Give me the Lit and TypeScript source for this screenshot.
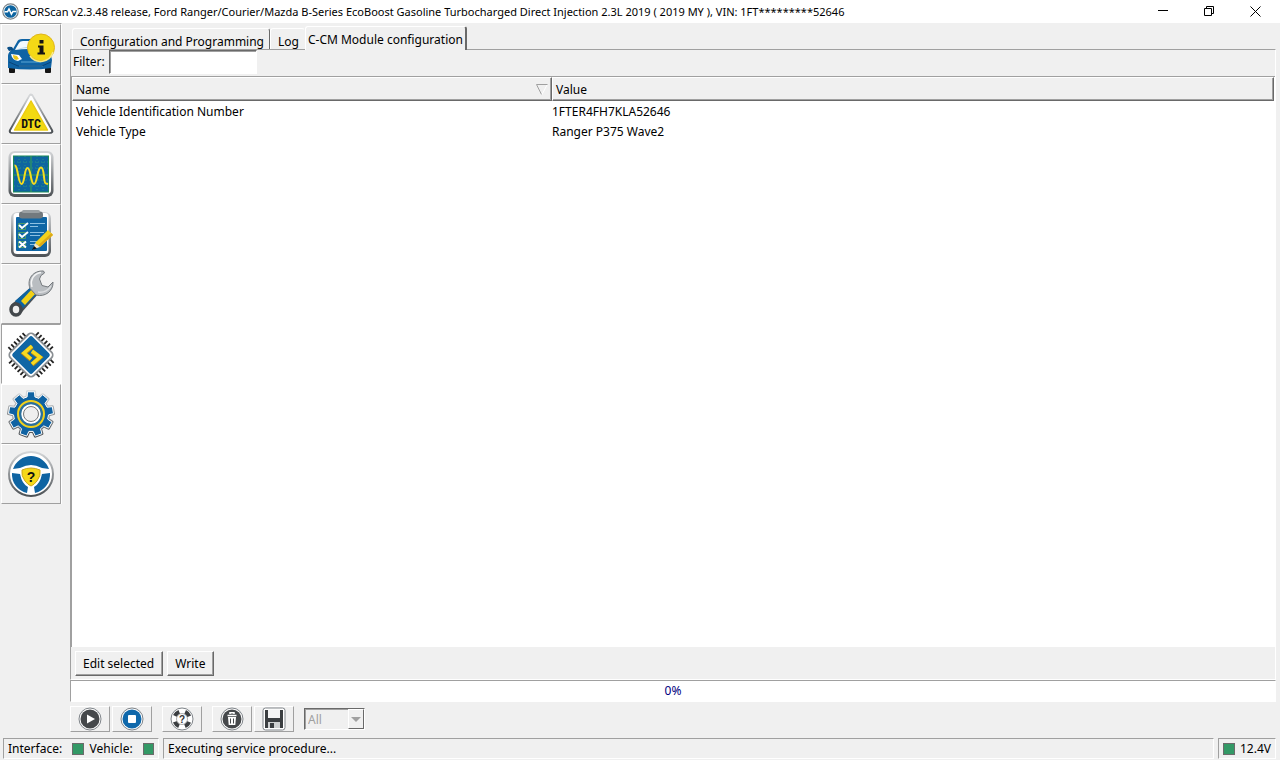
import { LitElement, html, svg, css, TemplateResult } from "lit";
import { customElement, state } from "lit/decorators.js";
import { classMap } from "lit/directives/class-map.js";

const logoIcon = html`<svg width="17" height="17" viewBox="0 0 17 17" aria-hidden="true">
  <circle cx="8.5" cy="8.5" r="7.7" fill="#fff" stroke="#7d858a" stroke-width="1.2" />
  <circle cx="8.5" cy="8.5" r="6.3" fill="#0d64a0" />
  <path d="M2.5 8.8h3L7 6l2.4 5.2L11 8.4h3.4" fill="none" stroke="#fff" stroke-width="1.5" />
</svg>`;

// Outline of a nine-toothed gear centred at 24,24; the first tooth points up.
const gearPath = (() => {
  const at = (deg: number, r: number) => {
    const a = ((deg - 90) * Math.PI) / 180;
    return `${(24 + r * Math.cos(a)).toFixed(1)} ${(24 + r * Math.sin(a)).toFixed(1)}`;
  };
  const pts: string[] = [];
  for (let i = 0; i < 9; i++) {
    const t = i * 40;
    pts.push(at(t - 13, 17.5), at(t - 9, 22.5), at(t + 9, 22.5), at(t + 13, 17.5));
  }
  return `M${pts.join("L")}z`;
})();

const icons: Record<string, TemplateResult> = {
  car: svg`
    <rect x="2" y="35" width="6" height="8" rx="1" fill="#151515" /><rect x="38" y="35" width="6" height="8" rx="1" fill="#151515" />
    <path d="M1 38V26q0-4 5-7l4-7q1-3 5-3h18l10 12 2 9-1 8q-20 3-43 0z" fill="#0f63a4" />
    <path d="M9 18l3-5q1-2 4-2h17v9q-12-2-25 0z" fill="#f2f9fd" />
    <path d="M14 18q10-2 18-1v2q-10-2-21 0z" fill="#9fcbe6" />
    <path d="M0 18q1-2 5-1l2 3-5 1z" fill="#0b4f87" />
    <path d="M4 24l8 1 3 4-4 2q-6-1-7-7z" fill="#fff" /><path d="M6 25l4 1 2 3-3 1q-3-1-3-5z" fill="#e8c51d" />
    <path d="M14 32h20M12 36h24" stroke="#5da7d4" stroke-width="1" fill="none" />
    <path d="M2 32l9 4h24l9-4" stroke="#0a4478" fill="none" />
    <circle cx="34" cy="17.500" r="13.500" fill="#f4d816" stroke="#e0b51c" stroke-width="1" />
    <path d="M23 26a13 13 0 0 0 23-4" fill="none" stroke="#f8e98a" stroke-width="1.500" />
    <path d="M32.500 10h4v3.500h-4zM31 15.500h5.500v7H38v2h-7.500v-2h2v-5H31z" fill="#141414" />`,
  dtc: svg`
    <path d="M24 6.500L43.500 41h-39z" fill="#fff" stroke="url(#silver)" stroke-width="5.500" stroke-linejoin="round" />
    <path d="M24 7L43 41H5z" fill="#fff" stroke="#fff" stroke-width="2.500" stroke-linejoin="round" />
    <path d="M24 11L40.500 40h-33z" fill="#f2d912" stroke="#eccb12" stroke-width="1.500" stroke-linejoin="round" />
    <text x="24" y="38" text-anchor="middle" class="glyph narrow">DTC</text>`,
  scope: svg`
    <rect x="1.500" y="1" width="45" height="46" rx="6" fill="url(#silver)" />
    <rect x="4" y="3" width="40" height="41" rx="4" fill="#fff" />
    <rect x="6.500" y="6" width="35" height="36" fill="#0e65a0" stroke="#1d8a57" />
    <path d="M12 6v36M18 6v36M30 6v36M36 6v36M7 12h34M7 18h34M7 30h34M7 36h34" stroke="#268f86" stroke-dasharray="1 2" />
    <path d="M24 6v36M7 25h34" stroke="#3ba54b" />
    <path d="M7.500 15.500C11 15 11 34 14.500 34S17 18 20.500 18 23.500 34 27 34 30 17.500 34 17.500 36 33.500 39 33.500L41 34" fill="none" stroke="#f6dc1e" stroke-width="2" />`,
  checklist: svg`
    <rect x="4" y="2" width="40" height="45" rx="6" fill="url(#silver)" />
    <rect x="6.500" y="3" width="35" height="41" rx="3.500" fill="#fff" />
    <rect x="9" y="7" width="31" height="34" rx="1" fill="#0f66a5" />
    <rect x="12" y="1.500" width="24" height="7" rx="3" fill="#737a7e" /><rect x="15" y="0" width="18" height="3" rx="1.500" fill="#9aa0a3" />
    <path d="M11.500 13.500h7v6h-7zM11.500 22.500h7v6h-7zM11.500 31.500h7v6h-7z" fill="none" stroke="#4e9b66" />
    <path d="M12 15l3 3 6-5M12 24l3 3 6-5" fill="none" stroke="#fff" stroke-width="2" />
    <path d="M12 31.500l7 6M19 31.500l-7 6" stroke="#fff" stroke-width="2" />
    <path d="M23 13.500h15M23 16.500h8M23 22.500h14M23 25.500h10M23 31.500h8M23 34.500h5" stroke="#8cc0e2" />
    <path d="M28 33L41 20l5 5L33 37z" fill="#f4d11d" /><path d="M31 35.500L44.500 23l1.500 2-13 12z" fill="#dda916" />
    <path d="M28 33l5 4-7 2.500z" fill="#f6e6c0" /><path d="M27 36l3 2.500-5 1.500z" fill="#111" />`,
  wrench: svg`
    <path d="M3.500 35.500L25 16l7 7-17 19z" fill="#4b5054" />
    <path d="M8 31L24 17l6.500 6.500L15 39z" fill="#0e63a1" /><path d="M14 31L25 19l4 4-11 12z" fill="#f1d017" />
    <path d="M36.500 1C26 .5 19.500 9 23 18.500l6 6.500c9 2.500 17.500-4 17-13l-5 5-6-1.500-2.500-6.500q.5-4 5-6z" fill="#b9bdc1" stroke="#74797d" stroke-linejoin="round" />
    <path d="M25 17C22.500 9 28 3 34 2.500" fill="none" stroke="#f3f4f5" stroke-width="1.500" />
    <path d="M31 22c6 1 11-2 13-6" fill="none" stroke="#dcdee0" stroke-width="1.500" />
    <ellipse cx="9" cy="39.500" rx="5" ry="5.500" fill="#efefef" stroke="#43484c" stroke-width="3.500" />`,
  chip: svg`
    ${[45, 135, 225, 315].map((a) => svg`<path d="M13.500 7V2.500M17.500 7V2.500M21.500 7V2.500M25.500 7V2.500M29.500 7V2.500M33.500 7V2.500" transform="rotate(${a} 24 24)" stroke="#222" stroke-width="1.800" />`)}
    <rect x="7.500" y="7.500" width="33" height="33" rx="4" transform="rotate(45 24 24)" fill="#fff" stroke="#8a8f93" stroke-width="1.800" />
    <rect x="10" y="10" width="28" height="28" rx="2.500" transform="rotate(45 24 24)" fill="#0f66a5" />
    <path d="M25 15.500l-8 7 7 6M25 20.500l8 6-8 7" fill="none" stroke="#b98b12" stroke-width="4.500" />
    <path d="M25 15l-8 7 7 6M25 20l8 6-8 7" fill="none" stroke="#f7da22" stroke-width="3.500" />`,
  gear: svg`
    <path d=${gearPath} fill="#fff" stroke="url(#silver)" stroke-width="3" stroke-linejoin="round" />
    <path d=${gearPath} fill="#0f62a2" stroke="#fff" stroke-width="1" stroke-linejoin="round" />
    <circle cx="24" cy="24" r="13" fill="#2a6f9c" stroke="#f1d01b" stroke-width="2" />
    <circle cx="24" cy="24" r="8.500" fill="#efefef" stroke="#fff" stroke-width="2.500" />
    <circle cx="24" cy="24" r="7.500" fill="#efefef" stroke="#777" />`,
  wheel: svg`
    <circle cx="24" cy="24" r="22" fill="#fff" stroke="url(#silver)" stroke-width="2" />
    <path d="M6 19A19 19 0 0 1 42 19L35 18Q29 15 24 15T13 18z" fill="#0f64a2" />
    <path d="M5 23l8 1Q15 34 21 37l-1 6A19 19 0 0 1 5 23zM43 23l-8 1Q33 34 27 37l1 6A19 19 0 0 0 43 23z" fill="#0f64a2" />
    <path d="M15 20q9-4 18 0 1 6-3 11-3 4-6 5-3-1-6-5-4-5-3-11z" fill="#f5d81a" stroke="#cfa91c" />
    <text x="24" y="32" text-anchor="middle" class="glyph">?</text>`,
};

const nav: [string, string][] = [
  ["car", "Vehicle information"], ["dtc", "DTC"], ["scope", "Dashboard"], ["checklist", "Tests"],
  ["wrench", "Service functions"], ["chip", "Configuration and Programming"], ["gear", "Settings"], ["wheel", "Help"],
];

const ring = (fill: string) => svg`<circle cx="12" cy="12" r="11" fill="#fff" stroke="#80858a" /><circle cx="12" cy="12" r="9.500" fill=${fill} />`;

const tools: { label: string; gap?: boolean; icon: TemplateResult }[] = [
  { label: "Run", icon: svg`${ring("#45484b")}<path d="M9 7.500v9l8-4.500z" fill="#fff" />` },
  { label: "Stop", icon: svg`${ring("#0f68ab")}<rect x="8" y="8" width="8" height="8" rx="1" fill="#fff" />` },
  { label: "Help", gap: true, icon: svg`<circle cx="12" cy="12" r="11" fill="#fff" stroke="#80858a" />
      <circle cx="12" cy="12" r="7.500" fill="none" stroke="#3b3e41" stroke-width="4.500" stroke-dasharray="5.890 5.890" transform="rotate(22.500 12 12)" />
      <circle cx="12" cy="12" r="5.500" fill="#fff" stroke="#999" stroke-width=".8" />
      <text x="12" y="15.500" text-anchor="middle" class="glyph small">?</text>` },
  { label: "Clear", gap: true, icon: svg`${ring("#45484b")}<path d="M7.500 8.500h9M10 7V5.800h4V7" stroke="#fff" stroke-width="1.500" fill="none" />
      <path d="M8 10h8l-.7 8H8.700z" fill="#fff" /><path d="M10.500 11.500v5M13.500 11.500v5" stroke="#45484b" />` },
  { label: "Save", icon: svg`<rect x="1" y="1" width="22" height="22" rx="2.500" fill="#fff" stroke="#80858a" />
      <path d="M3 3h18v18H3z" fill="#3b3e41" /><path d="M6 2.500h12V11H6z" fill="#f4f4f4" />
      <path d="M6 15h12v6H6z" fill="#cfd1d2" /><path d="M8 16h4v5H8z" fill="#3b3e41" />` },
];

@customElement("app-root")
export class AppRoot extends LitElement {
  @state() private section = "chip";
  @state() private filter = "";

  private rows = [
    ["Vehicle Identification Number", "1FTER4FH7KLA52646"],
    ["Vehicle Type", "Ranger P375 Wave2"],
  ];

  static styles = css`
    :host {
      display: flex;
      flex-direction: column;
      min-height: 100vh;
      background: #f0f0f0;
      color: #000;
      font: 12px/16px "Noto Sans", "Open Sans", sans-serif;
    }
    *, *::before, *::after { box-sizing: border-box; }
    button, input, select { font: inherit; color: inherit; margin: 0; border-radius: 0; }
    svg { display: block; }
    .glyph { font: bold 14px "Liberation Sans", sans-serif; fill: #111; }
    .glyph.narrow { font: bold 13px "Liberation Sans Narrow", "Roboto Condensed", "Open Sans Condensed", "Liberation Sans", sans-serif; font-size: 12px; }
    .glyph.small { font-size: 10px; fill: #333; }

    .titlebar { display: flex; align-items: center; height: 23px; background: #fff; padding: 0 2px; }
    .titlebar h1 { margin: 0 auto 0 4px; font-size: 11px; font-weight: 400; white-space: nowrap; }
    .win { width: 46px; height: 22px; padding: 0; border: 0; background: none; display: grid; place-items: center; }

    .body { flex: 1; display: flex; gap: 8px; padding-right: 4px; }
    .nav { width: 62px; border-right: 1px solid #fff; border-top: 1px solid #a0a0a0; align-self: flex-start; padding-left: 1px; }
    .nav button {
      display: grid; place-items: center; width: 60px; height: 60px; padding: 0; background: #f0f0f0;
      border: 1px solid; border-color: #fff #a0a0a0 #a0a0a0 #fff;
    }
    .nav button.on { background: #fff; border-color: #a0a0a0 #fff #fff #a0a0a0; padding-top: 2px; }

    .main { flex: 1; display: flex; flex-direction: column; min-width: 0; padding-top: 3px; }
    .tabs { display: flex; align-items: flex-end; height: 23px; padding-left: 2px; }
    .tab {
      height: 21px; padding: 5px 5px 0 7px; border: 1px solid; border-color: #fff #696969 transparent #fff;
      border-bottom: 0; border-radius: 3px 3px 0 0; background: #f0f0f0; white-space: nowrap; line-height: 15px;
    }
    .tab.plain { border-right-color: transparent; }
    .tab.on { height: 24px; padding: 4px 2px 2px; margin-bottom: -1px; z-index: 1; position: relative; border-right: 2px solid #696969; }

    .page { flex: 1; display: flex; flex-direction: column; border: 1px solid; border-color: #a0a0a0 #fff #fff #a0a0a0; }
    .filter { display: flex; align-items: center; gap: 4px; padding: 0 0 2px 2px; height: 26px; }
    .filter input {
      width: 148px; height: 24px; padding: 1px 3px; background: #fff; outline: none;
      border: 1px solid; border-color: #696969 #fff #fff #696969; box-shadow: inset 1px 1px #a0a0a0;
    }
    .list { flex: 1; background: #fff; border-left: 1px solid #a0a0a0; border-top: 1px solid #a0a0a0; padding-right: 1px; }
    table { width: 100%; border-collapse: separate; border-spacing: 0; table-layout: fixed; }
    th {
      height: 24px; padding: 2px 3px 0; text-align: left; font-weight: 400; background: #f0f0f0;
      border: 1px solid; border-color: #fff #696969 #696969 #fff; box-shadow: inset -1px -1px #a0a0a0;
    }
    th:first-child { width: 480px; }
    .sort { display: flex; align-items: center; justify-content: space-between; }
    .sort svg { margin-bottom: 2px; }
    td { height: 20px; padding: 0 0 0 4px; }
    td + td { padding-left: 0; }
    tbody::before { content: ""; display: block; height: 1px; }
    .actions { display: flex; gap: 4px; padding: 4px 4px 3px; }
    .actions button, .combo {
      background: #f0f0f0; border: 1px solid; border-color: #fff #696969 #696969 #fff; box-shadow: inset -1px -1px #a0a0a0;
    }
    .actions button { height: 25px; padding: 0 8px 0 7px; }

    .progress {
      display: grid; place-items: center; height: 22px; color: #000080; background: #fff;
      border: 1px solid; border-color: #a0a0a0 #fff #fff #a0a0a0;
    }
    .tools { display: flex; align-items: center; gap: 2px; padding: 4px 0 3px; }
    .tools button {
      display: grid; place-items: center; width: 40px; height: 26px; padding: 0; background: #f0f0f0;
      border: 1px solid; border-color: #fff #a0a0a0 #a0a0a0 #fff;
    }
    .tools button.gap { margin-left: 8px; }
    .combo {
      position: relative; width: 61px; height: 22px; margin-left: 8px;
      border-color: #696969 #fff #fff #696969; box-shadow: inset 1px 1px #a0a0a0;
    }
    .combo select { appearance: none; width: 100%; height: 20px; padding: 2px 3px 0; border: 0; background: none; color: #a0a0a0; opacity: 1; }
    .arrow {
      position: absolute; right: 0; top: 0; width: 16px; height: 20px; display: grid; place-items: center; pointer-events: none;
      background: #f0f0f0; border: 1px solid; border-color: #fff #696969 #696969 #fff;
    }

    .status { display: flex; gap: 4px; padding: 3px 4px 1px 3px; }
    .status > div {
      display: flex; align-items: center; height: 21px; padding: 0 4px; white-space: nowrap;
      border: 1px solid; border-color: #a0a0a0 #fff #fff #a0a0a0;
    }
    .status .grow { flex: 1; }
    .status .links { gap: 6px; width: 156px; }
    .links span { padding-right: 4px; }
    .status .volts { gap: 5px; width: 58px; }
    .lamp { width: 12px; height: 12px; background: #339966; border: 1px solid #6b6b6b; }
  `;

  render() {
    return html`
      <header class="titlebar">
        ${logoIcon}
        <h1>FORScan v2.3.48 release, Ford Ranger/Courier/Mazda B-Series EcoBoost Gasoline Turbocharged Direct Injection 2.3L 2019 ( 2019 MY ), VIN: 1FT*********52646</h1>
        <button class="win" aria-label="Minimize"><svg width="10" height="11"><path d="M0 4.500h10" stroke="#000" /></svg></button>
        <button class="win" aria-label="Restore"><svg width="11" height="11" fill="none" stroke="#000"><path d="M.5 2.500h7v7h-7zM2.500 2V.5h7v7H8" /></svg></button>
        <button class="win" aria-label="Close"><svg width="11" height="11"><path d="M.5.5l10 10M10.500.5l-10 10" stroke="#000" /></svg></button>
      </header>
      <div class="body">
        <nav class="nav">
          ${nav.map(([id, label]) => html`
            <button class=${classMap({ on: this.section === id })} aria-label=${label} @click=${() => (this.section = id)}>
              <svg width="48" height="48" viewBox="0 0 48 48" aria-hidden="true">
                <defs><linearGradient id="silver" x1="0" y1="0" x2="0" y2="1">
                  <stop offset="0" stop-color="#d4d6d8" /><stop offset="1" stop-color="#4c5155" />
                </linearGradient></defs>
                ${icons[id]}
              </svg>
            </button>`)}
        </nav>
        <main class="main">
          <div class="tabs" role="tablist">
            <button class="tab" role="tab">Configuration and Programming</button>
            <button class="tab plain" role="tab">Log</button>
            <button class="tab on" role="tab" aria-selected="true">C-CM Module configuration</button>
          </div>
          <section class="page">
            <div class="filter">
              <label for="filter">Filter:</label>
              <input id="filter" type="text" .value=${this.filter}
                @input=${(e: Event) => (this.filter = (e.target as HTMLInputElement).value)} />
            </div>
            <div class="list">
              <table>
                <thead>
                  <tr>
                    <th scope="col"><span class="sort">Name
                      <svg width="12" height="11" fill="none"><path d="M11.500.5H.5L5.500 10.500" stroke="#a0a0a0" /><path d="M11 1L6 10.500" stroke="#fff" /></svg>
                    </span></th>
                    <th scope="col">Value</th>
                  </tr>
                </thead>
                <tbody>
                  ${this.rows
                    .filter((r) => r.join(" ").toLowerCase().includes(this.filter.toLowerCase()))
                    .map(([name, value]) => html`<tr><td>${name}</td><td>${value}</td></tr>`)}
                </tbody>
              </table>
            </div>
            <div class="actions"><button>Edit selected</button><button>Write</button></div>
          </section>
          <div class="progress" role="progressbar" aria-valuenow="0" aria-label="Progress">0%</div>
          <div class="tools">
            ${tools.map((t) => html`
              <button class=${classMap({ gap: !!t.gap })} aria-label=${t.label}>
                <svg width="24" height="24" viewBox="0 0 24 24" aria-hidden="true">${t.icon}</svg>
              </button>`)}
            <div class="combo">
              <select aria-label="Show" disabled><option>All</option></select>
              <span class="arrow"><svg width="10" height="5"><path d="M0 0h10L5 5z" fill="#a0a0a0" /></svg></span>
            </div>
          </div>
        </main>
      </div>
      <footer class="status">
        <div class="links"><span>Interface:</span><i class="lamp"></i><span>Vehicle:</span><i class="lamp"></i></div>
        <div class="grow">Executing service procedure...</div>
        <div class="volts"><i class="lamp"></i>12.4V</div>
      </footer>`;
  }
}
